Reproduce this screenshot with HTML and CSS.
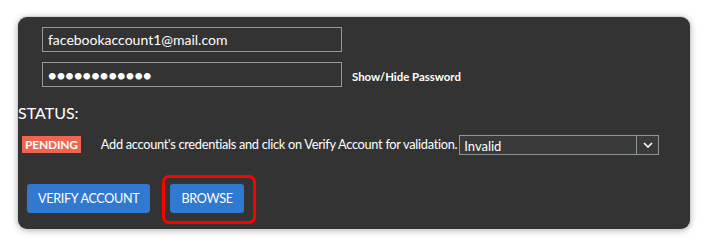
FILE: index.html
```html
<!DOCTYPE html>
<html lang="en">
<head>
  <meta charset="UTF-8" />
  <title>Account Verification</title>
  <link rel="stylesheet" href="styles.css">
</head>
<body>
  <div class="panel">
    <div class="field-row">
      <input type="text" class="field" value="facebookaccount1@mail.com" />
    </div>
    <div class="field-row">
      <input type="password" class="field" value="abcdefghijkl" />
      <a class="toggle">Show/Hide Password</a>
    </div>

    <div class="status-title">STATUS:</div>
    <div class="status-row">
      <span class="badge">PENDING</span>
      <span class="status-text">Add account's credentials and click on Verify Account for validation.</span>
      <div class="select">
        <span class="select-value">Invalid</span>
        <span class="select-arrow">
          <svg width="10" height="6" viewBox="0 0 10 6"><path d="M1 1 L5 5 L9 1" fill="none" stroke="#fff" stroke-width="1.6"/></svg>
        </span>
      </div>
    </div>

    <div class="actions">
      <button class="btn">VERIFY ACCOUNT</button>
      <button class="btn highlight">BROWSE</button>
    </div>
  </div>
</body>
</html>
```

FILE: styles.css
```css
body {
  margin: 0;
  background: #fff;
  font-family: Lato, 'Noto Sans', sans-serif;
  padding: 17px 18px 19px;
}

.panel {
  background: #333333;
  border-radius: 9px;
  box-shadow: 0 0 0 1px #d4d4d4, 0 1px 7px rgba(0, 0, 0, 0.35);
  width: 672px;
  height: 212px;
  box-sizing: border-box;
  padding: 10px 0 0 0;
  color: #fff;
}

.field-row {
  display: flex;
  align-items: center;
  gap: 10px;
  padding-left: 24px;
  margin-bottom: 10px;
}

.field {
  width: 300px;
  height: 25px;
  box-sizing: border-box;
  background: #333;
  border: 1px solid #999;
  color: #fff;
  font-family: inherit;
  font-size: 14px;
  padding: 0 5px;
  outline: none;
}

.field[type="password"] {
  font-size: 18px;
  letter-spacing: -1.8px;
  padding-left: 4px;
}

.toggle {
  font-size: 11.4px;
  font-weight: bold;
  margin-top: 4px;
}

.status-title {
  font-size: 16px;
  margin-top: 17px;
  line-height: 18px;
}

.status-row {
  display: flex;
  align-items: center;
  margin-top: 13px;
  padding-left: 4px;
  height: 20px;
}

.badge {
  background: #f0654f;
  font-size: 12px;
  font-weight: bold;
  letter-spacing: -0.2px;
  padding: 0 3px;
  height: 17px;
  line-height: 17px;
  margin-top: -2px;
}

.status-text {
  font-size: 12.8px;
  letter-spacing: -0.3px;
  margin-left: 20px;
  margin-right: 2px;
  margin-top: -3px;
  white-space: nowrap;
}

.select {
  display: flex;
  width: 200px;
  height: 20px;
  box-sizing: border-box;
  border: 1px solid #8c9598;
  background: #3a3a3a;
}

.select-value {
  flex: 1;
  font-size: 13px;
  line-height: 20px;
  padding-left: 4px;
}

.select-arrow {
  width: 21px;
  border-left: 1px solid #8c9598;
  display: flex;
  align-items: center;
  justify-content: center;
}

.actions {
  display: flex;
  gap: 20px;
  padding-left: 9px;
  margin-top: 29px;
}

.btn {
  background: #3179d0;
  color: #fff;
  border: none;
  border-radius: 3px;
  height: 29px;
  padding: 0 11px;
  font-family: inherit;
  font-size: 12.6px;
  letter-spacing: -0.3px;
  cursor: pointer;
}

.highlight {
  position: relative;
}

.highlight::after {
  content: '';
  position: absolute;
  top: -9px;
  bottom: -11px;
  left: -8px;
  right: -12px;
  border: 3px solid #ff0000;
  border-radius: 7px;
}
```
